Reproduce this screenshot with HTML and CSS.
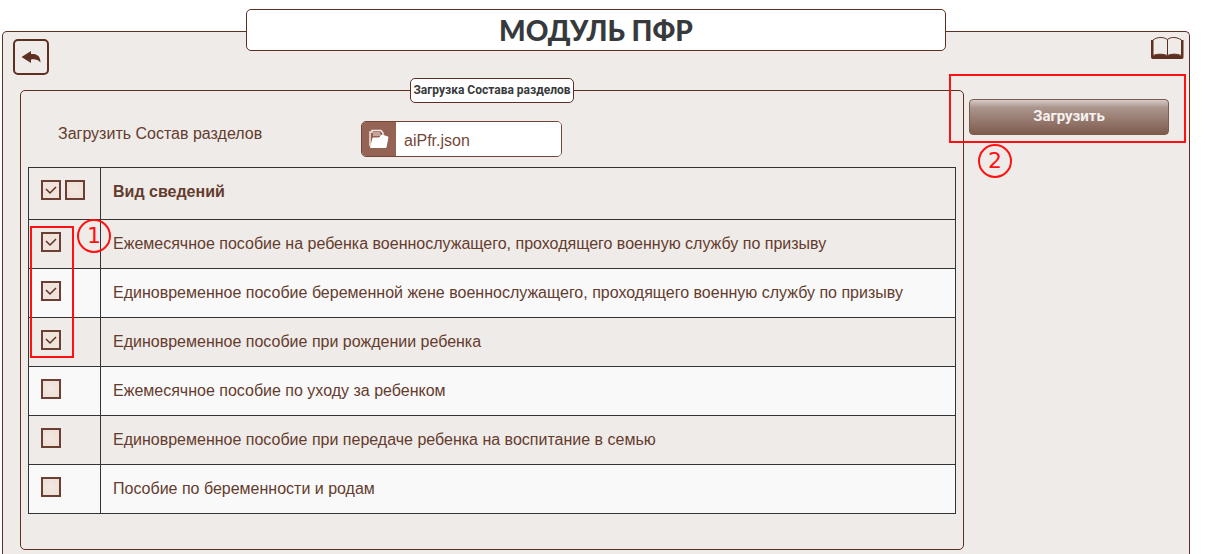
FILE: index.html
```html
<!DOCTYPE html>
<html lang="ru">
<head>
  <meta charset="UTF-8">
  <title>Модуль ПФР</title>
  <meta name="viewport" content="width=device-width, initial-scale=1">
  <link rel="stylesheet" href="styles.css">
</head>
<body>

  <div class="page">
    <header class="topbar">
      <button type="button" class="back" aria-label="Назад">
        <svg width="20" height="14" viewBox="0 0 20 14"><path d="M0.5 7 L10 1 V4 C16 3.5 19.5 6 19.5 12.5 C17 9.5 14 9 10 9.5 V13 Z" fill="#5e3022"/></svg>
      </button>
      <h1>МОДУЛЬ ПФР</h1>
      <a href="#" class="help" aria-label="Справка">
        <svg width="34" height="23" viewBox="0 0 34 23">
          <path d="M1 3 H3 V19 C8 16 13 16 17 19 C21 16 26 16 31 19 V3 H33.5 V20 Q33.5 22 32 22 H2.5 Q1 22 1 20 Z" fill="#5e3022"/>
          <path d="M3 18.5 V3 C7 0 13 -0.5 17.5 2.5 C21 -0.5 27 0 31.5 3 V18.5 C26 16.5 21 17 17.5 18.5 C13 17 8 16.5 3 18.5 Z" fill="#efebe8" stroke="#5e3022"/>
          <path d="M17.5 2.5 V19" stroke="#5e3022"/>
        </svg>
      </a>
    </header>

    <main class="content">
      <fieldset>
        <legend>Загрузка Состава разделов</legend>

        <div class="file-row">
          <label for="fayl">Загрузить Состав разделов</label>
          <div class="file">
            <button type="button" aria-label="Выбрать файл">
              <svg width="20" height="20" viewBox="0 0 20 20">
                <path d="M1 17 V3 H3 V1.5 H12 L14 4 V7" fill="none" stroke="#f3e9e4" stroke-width="1.5"/>
                <path d="M4 4 H11 M4 6 H12" stroke="#f3e9e4"/>
                <path d="M1.5 18.5 L4 9 H10 L13 6 L19 8 L17 18.5 Z" fill="#fff" stroke="#fff" stroke-linejoin="round"/>
              </svg>
            </button>
            <input type="text" id="fayl" value="aiPfr.json" readonly>
          </div>
        </div>

        <table>
          <thead>
            <tr>
              <th class="check">
                <input type="checkbox" aria-label="Выбрать все" checked>
                <input type="checkbox" aria-label="Снять все">
              </th>
              <th>Вид сведений</th>
            </tr>
          </thead>
          <tbody>
            <tr>
              <td class="check"><input type="checkbox" id="v1" checked></td>
              <td><label for="v1">Ежемесячное пособие на ребенка военнослужащего, проходящего военную службу по призыву</label></td>
            </tr>
            <tr>
              <td class="check"><input type="checkbox" id="v2" checked></td>
              <td><label for="v2">Единовременное пособие беременной жене военнослужащего, проходящего военную службу по призыву</label></td>
            </tr>
            <tr>
              <td class="check"><input type="checkbox" id="v3" checked></td>
              <td><label for="v3">Единовременное пособие при рождении ребенка</label></td>
            </tr>
            <tr>
              <td class="check"><input type="checkbox" id="v4"></td>
              <td><label for="v4">Ежемесячное пособие по уходу за ребенком</label></td>
            </tr>
            <tr>
              <td class="check"><input type="checkbox" id="v5"></td>
              <td><label for="v5">Единовременное пособие при передаче ребенка на воспитание в семью</label></td>
            </tr>
            <tr>
              <td class="check"><input type="checkbox" id="v6"></td>
              <td><label for="v6">Пособие по беременности и родам</label></td>
            </tr>
          </tbody>
        </table>

        <div class="frame frame-rows"></div>
        <span class="step step-rows">1</span>
      </fieldset>

      <aside>
        <button type="button" class="upload">Загрузить</button>
        <div class="frame frame-upload"></div>
        <span class="step step-upload">2</span>
      </aside>
    </main>
  </div>

</body>
</html>
```
FILE: styles.css
```css
* {
  box-sizing: border-box;
}
body {
  margin: 0;
  padding: 31px 19px 0 2px;
  background: white;
  color: #643c2e;
  font-family: "Liberation Sans", Arial, sans-serif;
  font-size: 16px;
  line-height: 18px;
}
button {
  cursor: pointer;
}
.page {
  min-height: calc(100vh - 31px);
  padding: 7px 5px 0;
  background: #efebe8;
  border: 1px solid #5e3022;
  border-bottom: none;
  border-radius: 5px 5px 0 0;
}

/* header */
.topbar {
  display: grid;
  grid-template-columns: 1fr 700px 1fr;
  align-items: start;
  height: 39px;
}
.back {
  display: flex;
  align-items: center;
  justify-content: center;
  width: 36px;
  height: 36px;
  margin-left: 5px;
  padding: 0;
  background: none;
  border: 2px solid #5e3022;
  border-radius: 5px;
}
h1 {
  height: 42px;
  margin: -30px 0 0;
  background: white;
  border: 1px solid #5e3022;
  border-radius: 5px;
  color: #373a3c;
  font-family: Lato, "Open Sans", sans-serif;
  font-size: 28px;
  font-weight: 900;
  line-height: 40px;
  text-align: center;
}
.help {
  justify-self: end;
  height: 23px;
  margin-top: -2px;
}

/* content */
.content {
  display: flex;
  align-items: flex-start;
  gap: 5px;
  padding: 0 15px 0 12px;
}
fieldset {
  position: relative;
  flex: 1;
  min-width: 0;
  margin: 0;
  padding: 18px 7px 35px;
  border: 1px solid #5e3022;
  border-radius: 5px;
}
legend {
  margin: 0 auto;
  padding: 0 2px;
  background: white;
  border: 1px solid #5e3022;
  border-radius: 5px;
  color: #373a3c;
  font-family: Roboto, "Open Sans", sans-serif;
  font-size: 12px;
  font-weight: bold;
  line-height: 23px;
}
.file-row {
  display: grid;
  grid-template-columns: 303px 201px;
  padding: 0 0 10px 30px;
}
.file-row label {
  padding-top: 4px;
}
.file {
  display: flex;
  height: 36px;
  background: white;
  border: 1px solid #6f4638;
  border-radius: 5px;
  overflow: hidden;
}
.file button {
  display: flex;
  align-items: center;
  justify-content: center;
  width: 34px;
  padding: 0;
  background: #946353;
  border: none;
}
.file input {
  flex: 1;
  min-width: 0;
  padding: 4px 8px 0;
  border: none;
  background: white;
  color: #74483a;
  font: inherit;
}

/* table */
table {
  width: 100%;
  border-collapse: collapse;
}
th, td {
  height: 49px;
  padding: 0 12px;
  border: 1px solid #333;
  text-align: left;
}
th {
  height: 52px;
  padding-bottom: 4px;
}
tbody tr:nth-child(even) {
  background: #f9f9f9;
}
.check {
  width: 72px;
  padding: 0 12px 4px;
  font-size: 0;
}
th.check {
  padding-bottom: 8px;
}
.check input {
  appearance: none;
  width: 20px;
  height: 20px;
  margin: 0 4px 0 0;
  background: radial-gradient(#f3e8e0, #ebded6);
  border: 2px solid #6b4033;
  vertical-align: middle;
}
.check input:last-child {
  margin-right: 0;
}
.check input:checked {
  background: #efe3dc url("data:image/svg+xml,%3Csvg xmlns='http://www.w3.org/2000/svg' viewBox='0 0 16 16'%3E%3Cpath d='M3 7 L7 11 L13 5' fill='none' stroke='%235e3022' stroke-width='1.5'/%3E%3C/svg%3E") center / 16px 16px no-repeat;
}

/* right column */
aside {
  position: relative;
  width: 200px;
  padding-top: 21px;
}
.upload {
  display: block;
  width: 100%;
  height: 36px;
  padding: 0 0 2px;
  background: linear-gradient(#d5cbc6 0%, #ab968e 22%, #7f5b4e 100%);
  border: 1px solid #7f5b4e;
  border-radius: 4px;
  color: #f5f1ef;
  font-family: Roboto, "Open Sans", sans-serif;
  font-size: 15px;
  font-weight: bold;
}

/* step marks over the form */
.frame {
  position: absolute;
  border: 2px solid #f11;
  pointer-events: none;
}
.frame-rows {
  top: 123px;
  left: 9px;
  width: 44px;
  height: 132px;
}
.frame-upload {
  top: -4px;
  left: -20px;
  width: 237px;
  height: 69px;
}
.step {
  position: absolute;
  width: 34px;
  height: 34px;
  border: 2px solid #f11;
  border-radius: 50%;
  color: #f11;
  font-family: "DejaVu Sans", sans-serif;
  font-size: 22px;
  line-height: 30px;
  text-align: center;
}
.step-rows {
  top: 116px;
  left: 56px;
}
.step-upload {
  top: 66px;
  left: 9px;
}
```
